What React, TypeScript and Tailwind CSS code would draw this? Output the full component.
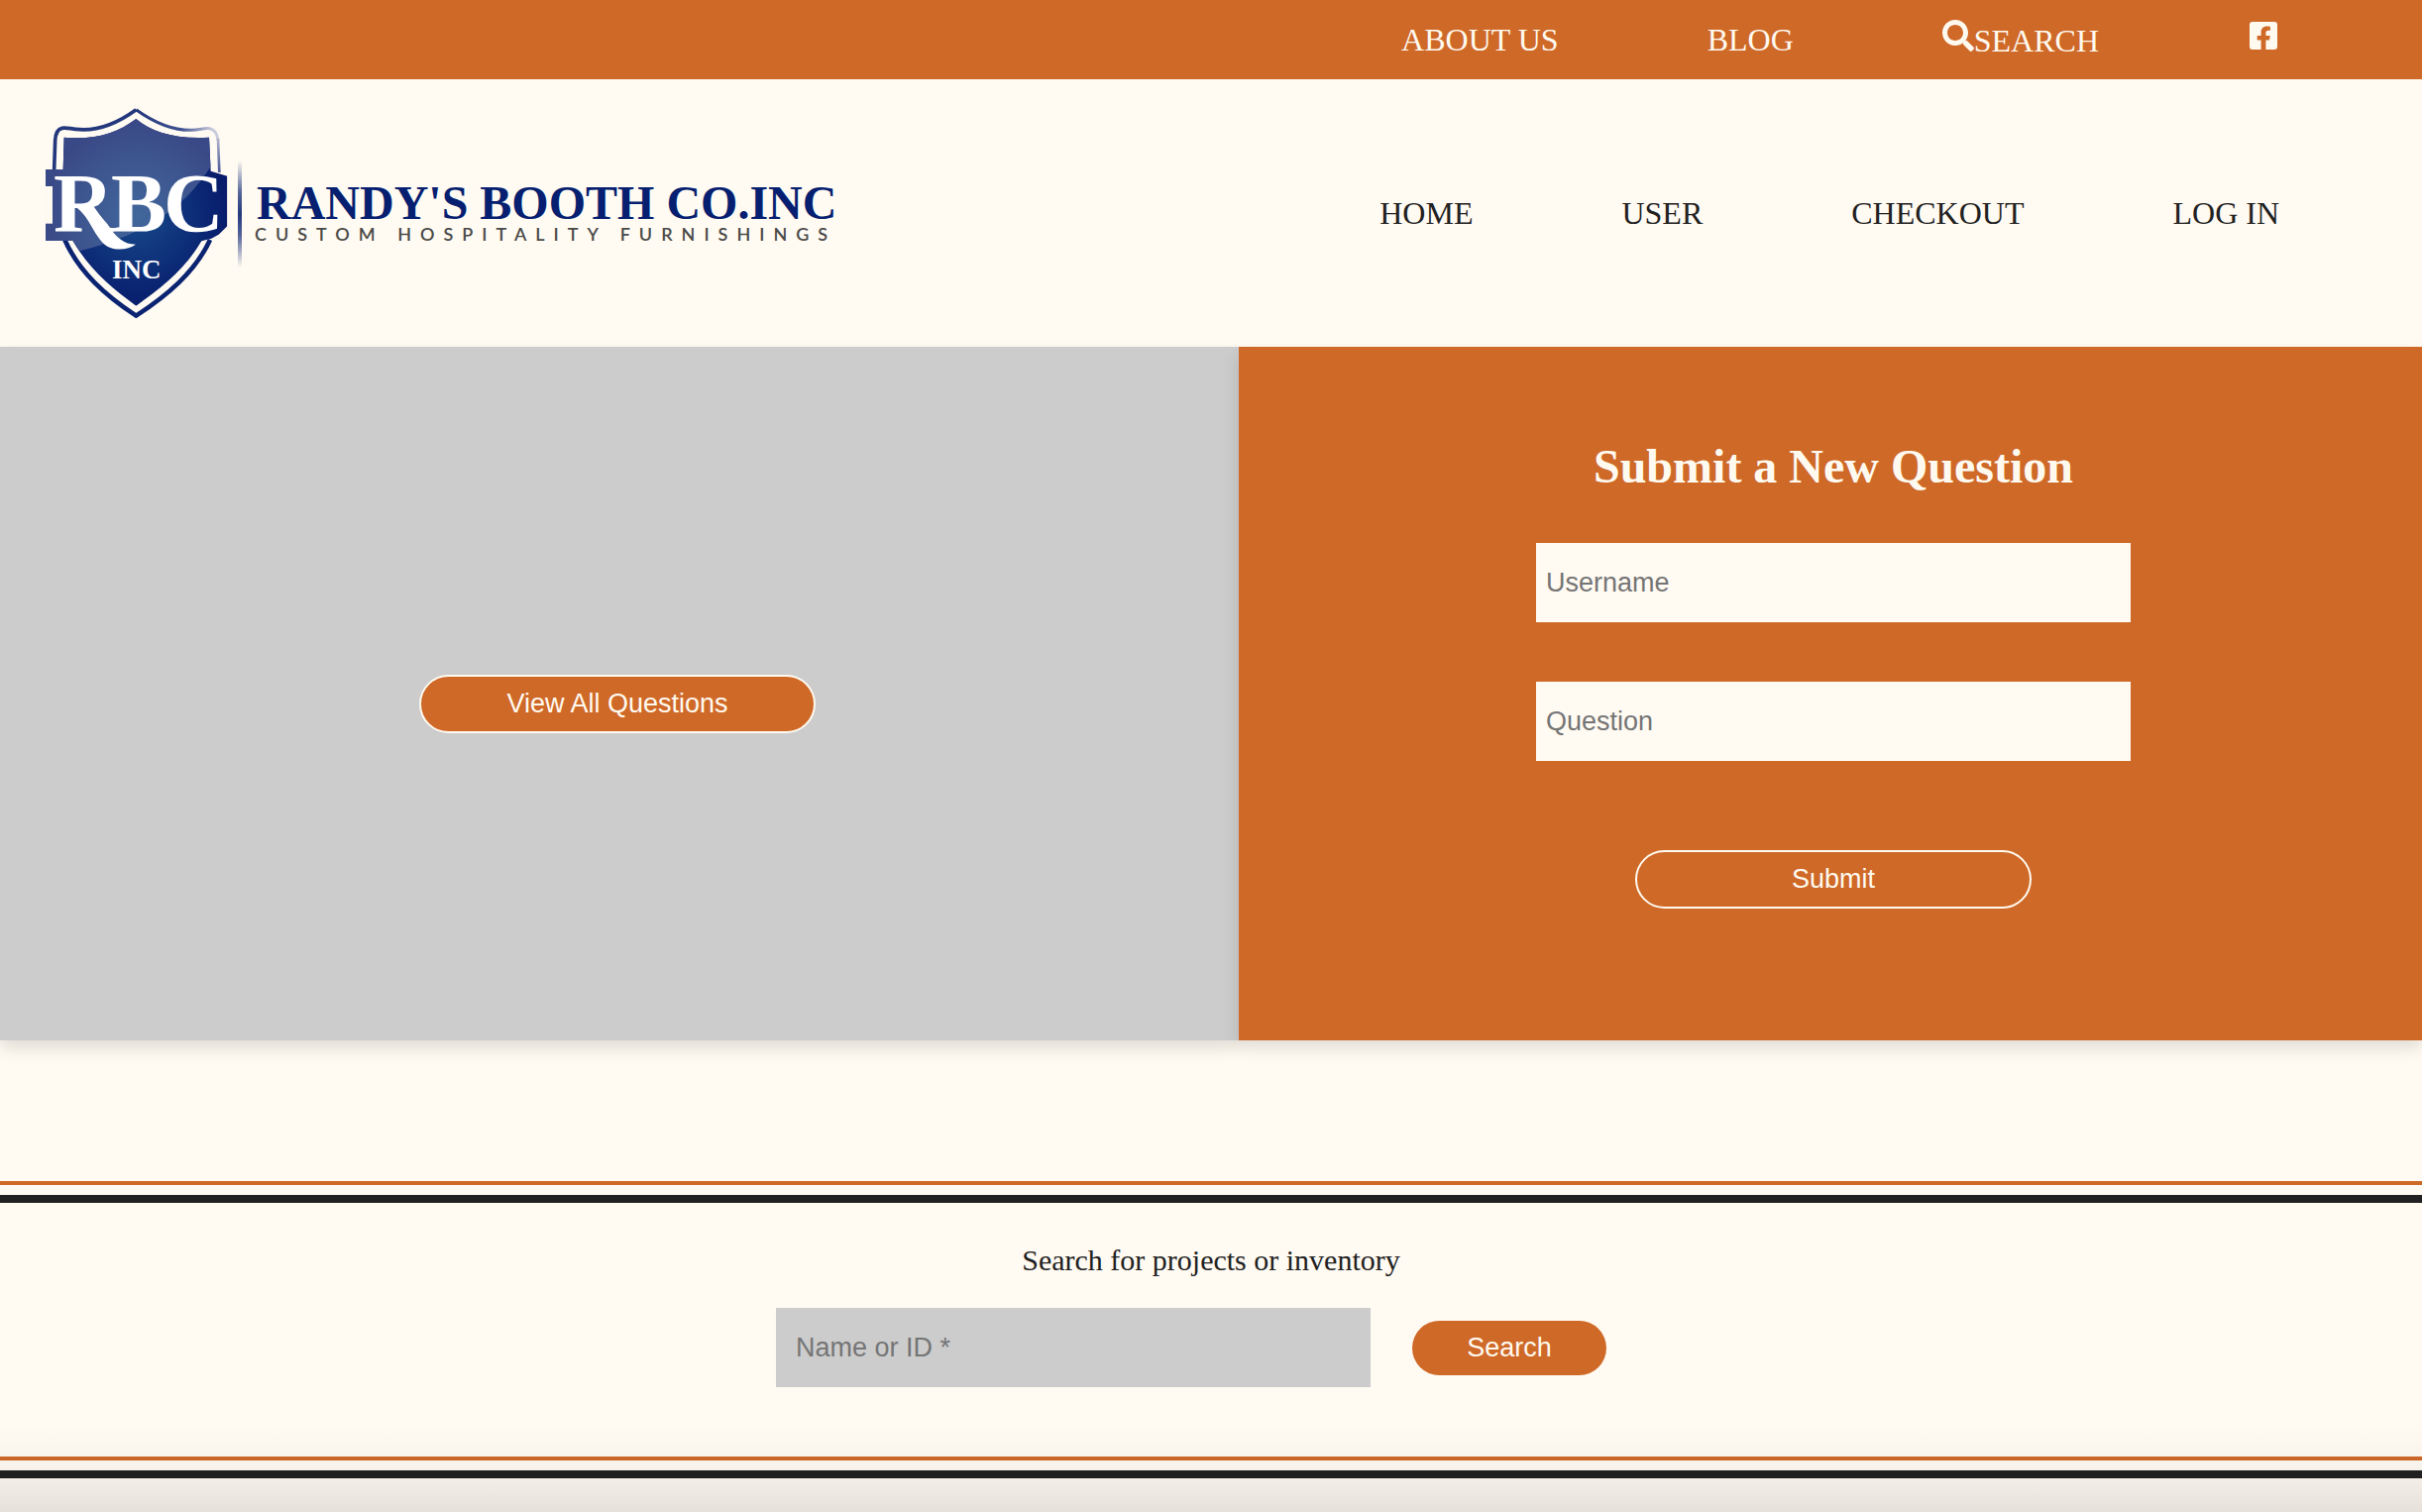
import React from "react";
import { FaSearch, FaFacebookSquare } from "react-icons/fa";

const serif = "font-['Liberation_Serif','Times_New_Roman',serif]";
const sans = "font-['Liberation_Sans',Arial,sans-serif]";

function Logo() {
  return (
    <svg
      viewBox="46 109 801 212"
      className="h-[212px] w-[801px] shrink-0"
      role="img"
      aria-label="Randy's Booth Co. Inc, custom hospitality furnishings"
    >
      <defs>
        <radialGradient id="body" gradientUnits="userSpaceOnUse" cx="325" cy="385" r="300">
          <stop offset="0" stopColor="#174a8a" />
          <stop offset="0.75" stopColor="#0a2472" />
          <stop offset="1" stopColor="#061a68" />
        </radialGradient>
        <radialGradient id="gloss" gradientUnits="userSpaceOnUse" cx="325" cy="385" r="290">
          <stop offset="0" stopColor="#41679b" />
          <stop offset="0.65" stopColor="#3d548f" />
          <stop offset="1" stopColor="#394886" />
        </radialGradient>
        <linearGradient id="rim" gradientUnits="userSpaceOnUse" x1="330" y1="60" x2="575" y2="130">
          <stop offset="0" stopColor="#24387d" />
          <stop offset="0.55" stopColor="#3d5090" />
          <stop offset="0.9" stopColor="#c8cbdb" />
          <stop offset="1" stopColor="#c8cbdb" />
        </linearGradient>
        <linearGradient id="rimSide" gradientUnits="userSpaceOnUse" x1="0" y1="125" x2="0" y2="250">
          <stop offset="0" stopColor="#c8cbdb" />
          <stop offset="1" stopColor="#4f5d98" />
        </linearGradient>
        <linearGradient id="divider" x1="0" y1="0" x2="0" y2="1">
          <stop offset="0" stopColor="#0b2472" stopOpacity="0" />
          <stop offset="0.3" stopColor="#0b2472" stopOpacity="0.7" />
          <stop offset="0.5" stopColor="#0b2472" stopOpacity="0.9" />
          <stop offset="0.7" stopColor="#0b2472" stopOpacity="0.7" />
          <stop offset="1" stopColor="#0b2472" stopOpacity="0" />
        </linearGradient>
        <clipPath id="shape">
          <path d="M322 90C370 130 440 152 543 146L548 248L598 263V415L572 440L550 452L520 460C470 545 400 600 322 656C245 600 180 545 130 458H48V243H101L104 146C200 154 265 133 322 90Z" />
        </clipPath>
      </defs>
      <g transform="translate(30 90) scale(0.33333)">
        <path d="M322 62C270 100 210 126 150 122C125 121 112 115 98 118C84 121 78 135 77 155L74 243" fill="none" stroke="#24387d" strokeWidth="11" />
        <path d="M322 62C375 100 430 125 490 124C515 124 530 116 545 119C560 122 568 135 570 155" fill="none" stroke="url(#rim)" strokeWidth="9" />
        <path d="M570 150L574 252" fill="none" stroke="url(#rimSide)" strokeWidth="8" />
        <path d="M106 456C150 555 230 625 322 686C415 625 500 555 546 456" fill="none" stroke="#0b2472" strokeWidth="14" />
        <g clipPath="url(#shape)">
          <rect x="40" y="50" width="570" height="650" fill="url(#body)" />
          <path d="M40 50H560V215C490 330 390 430 150 490H40Z" fill="url(#gloss)" />
          <rect x="40" y="294" width="29" height="113" fill="#fffaf0" />
        </g>
        <path d="M150 350C175 345 190 355 235 408C262 450 285 470 321 470C300 486 262 490 235 476C195 450 185 390 140 357Z" fill="#ffffff" />
      </g>
      <g fill="#ffffff" className={serif} fontWeight="700" fontSize="84">
        <text x="54" y="234">R</text>
        <text x="112" y="234">B</text>
        <text x="165" y="234">C</text>
      </g>
      <text x="113" y="281" fill="#ffffff" className={serif} fontWeight="700" fontSize="27">INC</text>
      <rect x="240" y="162" width="4" height="108" fill="url(#divider)" />
      <text x="259" y="221" fill="#061f70" className={serif} fontWeight="700" fontSize="48">RANDY'S BOOTH CO.INC</text>
      <text x="257" y="243" fill="#4a4a48" className="font-[Lato,sans-serif] tracking-[9px]" fontWeight="600" fontSize="18">
        CUSTOM HOSPITALITY FURNISHINGS
      </text>
    </svg>
  );
}

function Rules() {
  return (
    <div>
      <div className="h-1 bg-[#cf6928]" />
      <div className="mt-2.5 h-2 bg-[#212121]" />
    </div>
  );
}

const field = "h-20 w-[600px] text-[27px] placeholder:text-[#757575] outline-none";
const pill = "h-[59px] w-[400px] rounded-full border-2 border-[#fffaf0] bg-[#cf6928] text-[27px] text-[#fffaf0]";
const raised = "shadow-[0_8px_16px_rgba(0,0,0,0.12)]";

export default function App() {
  return (
    <div className={`relative flex min-h-screen flex-col overflow-hidden bg-[#fffaf2] text-[#212121] ${serif}`}>
      <nav aria-label="Secondary" className="flex h-20 items-center justify-end gap-[150px] bg-[#cf6928] pr-36 text-[32px] leading-9 text-[#fffaf0]">
        <a href="#about">ABOUT US</a>
        <a href="#blog">BLOG</a>
        <a href="#search" className="flex h-10 items-start leading-[42px]">
          <FaSearch className="size-8" />
          SEARCH
        </a>
        <a href="#facebook" aria-label="Facebook" className="h-10">
          <FaFacebookSquare className="size-8" />
        </a>
      </nav>

      <header className="flex h-[270px] items-center justify-between pl-[46px] pr-36">
        <a href="#home"><Logo /></a>
        <nav aria-label="Main" className="flex gap-[150px] text-[32px] leading-9">
          <a href="#home">HOME</a>
          <a href="#user">USER</a>
          <a href="#checkout">CHECKOUT</a>
          <a href="#login">LOG IN</a>
        </nav>
      </header>

      <main>
        <div className="grid h-[700px] grid-cols-[1250fr_1194fr]">
          <section className={`flex items-center justify-center bg-[#cccccc] pr-1 pt-5 ${raised}`}>
            <button type="button" className={`${pill} ${sans}`}>View All Questions</button>
          </section>
          <section className={`bg-[#cf6928] pl-1.5 pt-[94px] text-[#fffaf0] ${raised}`}>
            <form className="flex flex-col items-center" onSubmit={(e) => e.preventDefault()}>
              <h1 className="text-5xl leading-[54px] font-bold">Submit a New Question</h1>
              <input aria-label="Username" placeholder="Username" className={`${field} ${sans} mt-[50px] bg-[#fffaf2] px-2.5 text-[#212121]`} />
              <input aria-label="Question" placeholder="Question" className={`${field} ${sans} mt-15 bg-[#fffaf2] px-2.5 text-[#212121]`} />
              <button type="submit" className={`${pill} ${sans} mt-[90px]`}>Submit</button>
            </form>
          </section>
        </div>

        <section className="mt-[142px]">
          <Rules />
          <form className="flex flex-col items-center pb-[70px] pt-10" onSubmit={(e) => e.preventDefault()}>
            <label htmlFor="lookup" className="text-[30px] leading-9">Search for projects or inventory</label>
            <div className="mt-[30px] flex items-center gap-[42px] pr-10">
              <input id="lookup" placeholder="Name or ID *" className={`${field} ${sans} bg-[#cccccc] px-5`} />
              <button type="submit" className={`h-[55px] w-[196px] rounded-full bg-[#cf6928] text-[27px] text-[#fffaf0] ${sans}`}>Search</button>
            </div>
          </form>
          <Rules />
        </section>
      </main>

      <div className="pointer-events-none absolute inset-x-0 bottom-0 h-[90px] bg-linear-to-b from-black/0 via-black/3 to-black/10" />
    </div>
  );
}
